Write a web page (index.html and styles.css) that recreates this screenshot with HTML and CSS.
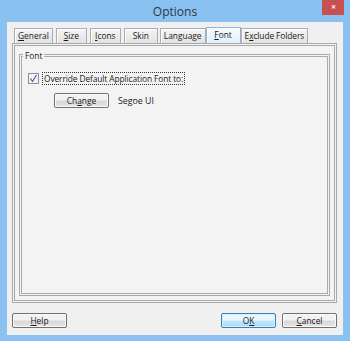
FILE: index.html
```html
<!DOCTYPE html>
<html lang="en">
<head>
    <meta charset="UTF-8">
    <title>Options</title>
    <link rel="stylesheet" href="styles.css">
</head>
<body>
    <div class="window">
        <div class="titlebar">
            <span></span>
            <span class="title">Options</span>
            <span class="close">&#x2715;</span>
        </div>
        <div class="client">
            <div class="tabs">
                <span class="tab"><u>G</u>eneral</span>
                <span class="tab"><u>S</u>ize</span>
                <span class="tab"><u>I</u>cons</span>
                <span class="tab">Skin</span>
                <span class="tab">Language</span>
                <span class="tab active"><u>F</u>ont</span>
                <span class="tab">E<u>x</u>clude Folders</span>
            </div>
            <div class="panel">
                <fieldset class="group">
                    <legend>Font</legend>
                    <div class="check-row">
                        <span class="checkbox">
                            <svg width="9" height="9" viewBox="0 0 9 9">
                                <path d="M1.5 4.5 L3.5 7.5 L7.5 1" fill="none" stroke="#3c64b4" stroke-width="1.2"/>
                            </svg>
                        </span>
                        <span class="focus">Override Default Application Font to:</span>
                    </div>
                    <div class="font-row">
                        <span class="button">Ch<u>a</u>nge</span>
                        <span class="font-name">Segoe UI</span>
                    </div>
                </fieldset>
            </div>
            <div class="footer">
                <span class="button"><u>H</u>elp</span>
                <span class="spacer"></span>
                <span class="button default">O<u>K</u></span>
                <span class="button"><u>C</u>ancel</span>
            </div>
        </div>
    </div>
</body>
</html>
```

FILE: styles.css
```css
body {
    margin: 0;
    font-family: "Open Sans", "Noto Sans", Arial, sans-serif;
    font-size: 8.4px;
    color: #1a1a1a;
}
.window {
    width: 350px;
    height: 341px;
    background: #89c1f1;
    display: flex;
    flex-direction: column;
}
.titlebar {
    height: 22px;
    display: grid;
    grid-template-columns: 1fr auto 1fr;
    align-items: start;
}
.title {
    font-size: 12px;
    line-height: 23px;
    color: #2a3746;
}
.close {
    justify-self: end;
    width: 22px;
    height: 15px;
    margin-right: 6px;
    background: #c75050;
    color: #fff;
    font-size: 6px;
    font-weight: bold;
    line-height: 15px;
    text-align: center;
}
.client {
    flex: 1;
    margin: 0 7px 7px 7px;
    background: #f0f0f0;
    padding: 5px 6px 7px 5px;
    display: flex;
    flex-direction: column;
}
.tabs {
    display: flex;
    align-items: flex-end;
    padding-left: 2px;
    height: 16px;
}
.tab {
    box-sizing: border-box;
    min-width: 31px;
    height: 15px;
    line-height: 14px;
    padding: 0 3px;
    margin-right: 3px;
    text-align: center;
    border: 1px solid #acacac;
    border-bottom: none;
    background: linear-gradient(#f4f4f4, #e2e2e2);
    box-shadow: inset 1px 1px #fff;
}
.tab:nth-child(4) {
    min-width: 34px;
    margin-right: 2px;
}
.tab:nth-child(5) {
    margin-right: 0;
}
.tab:last-child {
    letter-spacing: -0.1px;
}
.tab.active {
    height: 16px;
    min-width: 35px;
    margin-right: 0;
    border-color: #8cb6e0;
    background: linear-gradient(#f7fbfe, #e3eff9);
}
.panel {
    box-sizing: border-box;
    height: 260px;
    border: 3px double #a9a9a9;
    background: #f3f3f3;
    padding: 4px 4px 4px 4px;
}
.group {
    margin: 0;
    height: 100%;
    box-sizing: border-box;
    border: 3px double #a9a9a9;
    padding: 11px 6px 0 6px;
}
.group legend {
    padding: 0 2px;
    margin-left: -5px;
}
.check-row {
    display: flex;
    align-items: center;
    gap: 3px;
}
.checkbox {
    width: 9px;
    height: 9px;
    border: 1px solid #8f8f8f;
    background: #f4f4f4;
    display: flex;
}
.focus {
    border: 1px dotted #333;
    padding: 0 1px;
    line-height: 11px;
    letter-spacing: -0.1px;
}
.font-row {
    display: flex;
    align-items: center;
    gap: 9px;
    margin-top: 8px;
    padding-left: 26px;
}
.button {
    display: inline-block;
    width: 53px;
    height: 13px;
    line-height: 13px;
    text-align: center;
    border: 1px solid #707070;
    border-radius: 2px;
    background: linear-gradient(#f2f2f2 45%, #d8d8d8 55%, #e6e6e6);
    box-shadow: inset 0 0 0 1px #fafafa;
}
.font-name {
    font-size: 8.8px;
}
.footer {
    display: flex;
    margin-top: 10px;
    gap: 6px;
}
.spacer {
    flex: 1;
}
.button.default {
    border-color: #3c7fb1;
    background: linear-gradient(#eaf6fd 45%, #bee6fd 55%, #a7d9f5);
    box-shadow: inset 0 0 0 1px #d7efff;
}
```
